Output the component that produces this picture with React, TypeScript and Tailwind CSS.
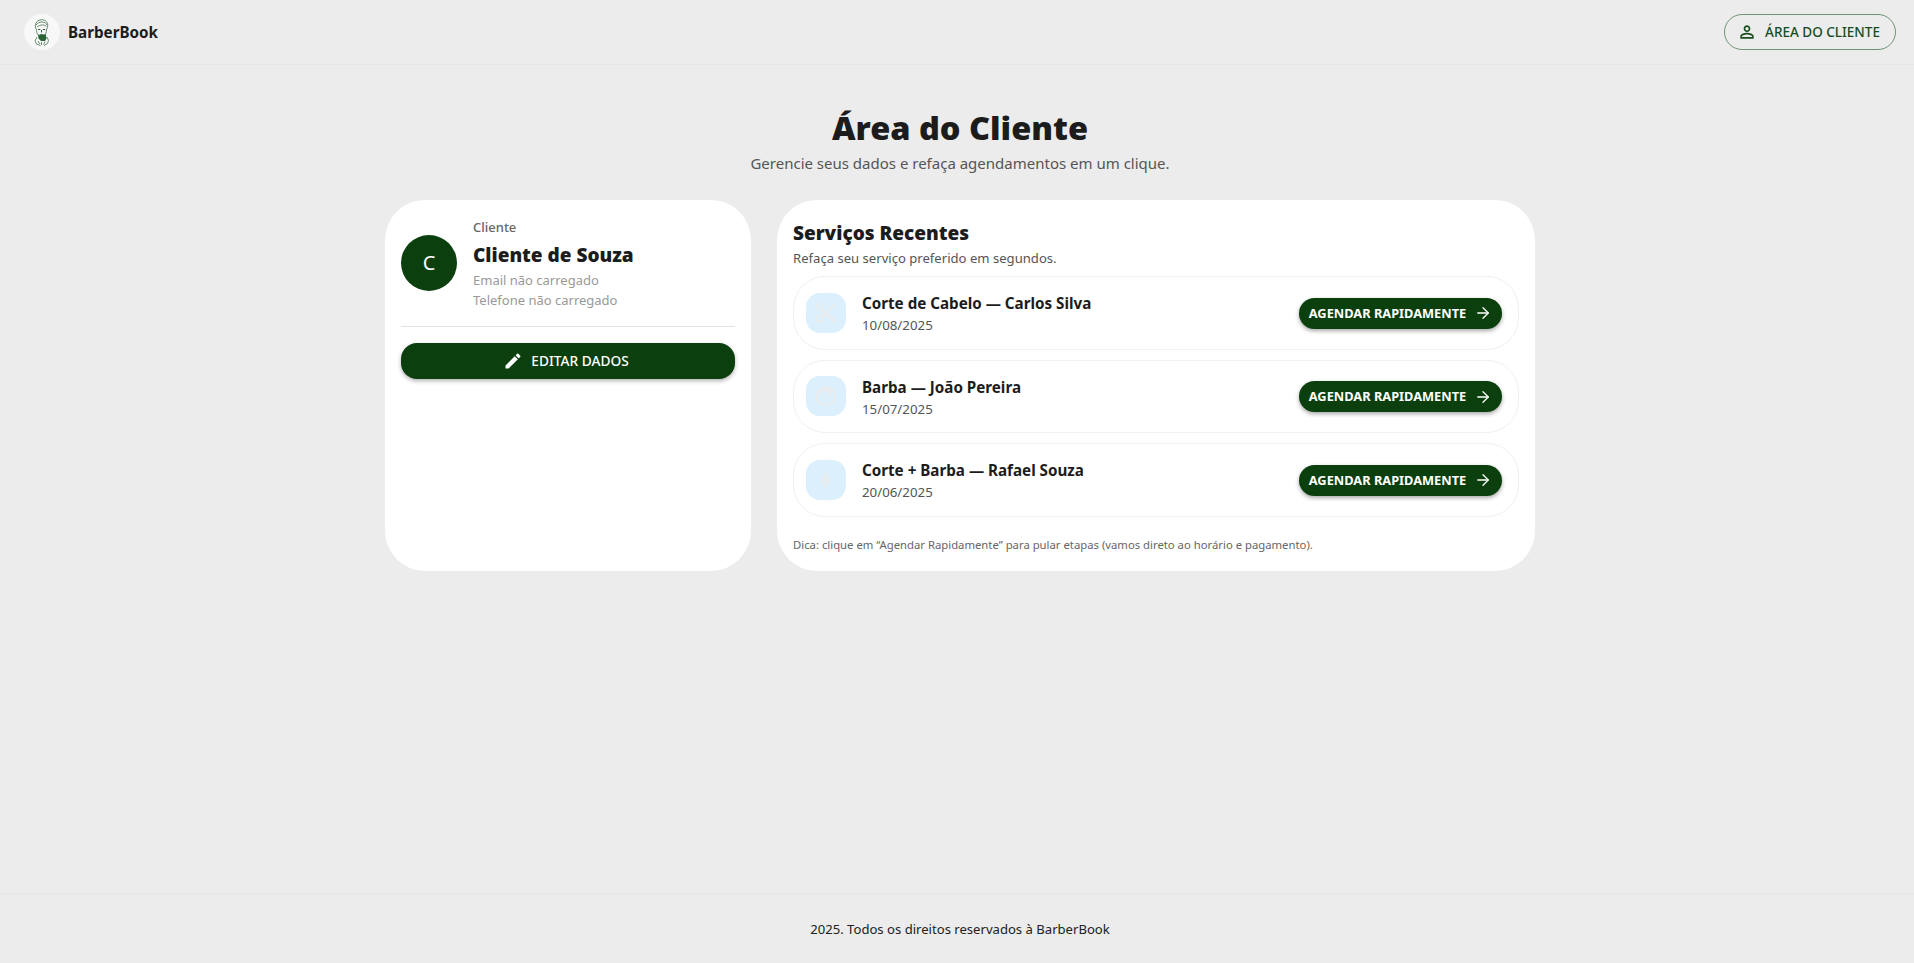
import { ArrowRight } from "lucide-react"

// material style glyphs, same ones the reference uses
const cutPath =
  "M9.64 7.64c.23-.5.36-1.05.36-1.64 0-2.21-1.79-4-4-4S2 3.79 2 6s1.79 4 4 4c.59 0 1.14-.13 1.64-.36L10 12l-2.36 2.36C7.14 14.13 6.59 14 6 14c-2.21 0-4 1.79-4 4s1.79 4 4 4 4-1.79 4-4c0-.59-.13-1.14-.36-1.64L12 14l7 7h3v-1L9.64 7.64zM6 8c-1.1 0-2-.89-2-2s.9-2 2-2 2 .89 2 2-.9 2-2 2zm0 12c-1.1 0-2-.89-2-2s.9-2 2-2 2 .89 2 2-.9 2-2 2zm6-7.5c-.28 0-.5-.22-.5-.5s.22-.5.5-.5.5.22.5.5-.22.5-.5.5zM19 3l-6 6 2 2 7-7V3z"
const facePath =
  "M9 11.75c-.69 0-1.25.56-1.25 1.25s.56 1.25 1.25 1.25 1.25-.56 1.25-1.25-.56-1.25-1.25-1.25zm6 0c-.69 0-1.25.56-1.25 1.25s.56 1.25 1.25 1.25 1.25-.56 1.25-1.25-.56-1.25-1.25-1.25zM12 2C6.48 2 2 6.48 2 12s4.48 10 10 10 10-4.48 10-10S17.52 2 12 2zm0 18c-4.41 0-8-3.59-8-8 0-.29.02-.58.05-.86 2.36-1.05 4.23-2.98 5.21-5.37C11.07 8.33 14.05 10 17.42 10c.78 0 1.53-.09 2.25-.26.21.71.33 1.47.33 2.26 0 4.41-3.59 8-8 8z"
const boltPath =
  "M11 21h-1l1-7H7.5c-.58 0-.57-.32-.38-.66.19-.34.05-.08.07-.12C8.48 10.94 10.42 7.54 13 3h1l-1 7h3.5c.49 0 .56.33.47.51l-.07.15C12.96 17.55 11 21 11 21z"

const services = [
  { id: 1, title: "Corte de Cabelo — Carlos Silva", date: "10/08/2025", icon: cutPath },
  { id: 2, title: "Barba — João Pereira", date: "15/07/2025", icon: facePath },
  { id: 3, title: "Corte + Barba — Rafael Souza", date: "20/06/2025", icon: boltPath },
]

function BarberLogo() {
  return (
    <svg width="18" height="27" viewBox="0 0 18 27" fill="none" stroke="#2c6337" strokeWidth="0.7">
      <path d="M3 10C1.5 6 2.5 1.5 8 .8c5-.5 7.5 3 6.5 7.5l-.8 2" />
      <path d="M3 6c2-2 3-3 6-3s4 1.5 5 3M4 8c2-1.5 3.500-2 5.500-2s3 .5 4 1.500" />
      <path d="M3.500 10c0 2.500.5 4.500 1.500 6M13.500 10c0 2-.3 3.500-.8 5" />
      <path d="M5 10.500h2.300M9.800 10.500h2.400M8.500 11v2.500" strokeWidth="1" />
      <path d="M5 15.500c1.500.8 2.500-.5 3.500-.5s2.500 1 4.200 0l.8 4.500-1.500 2.500H8l-2.500-2.500z" fill="#2c6337" stroke="none" />
      <path d="M4 18l-2 4 1.500 3 4 1.500M14 18l1.500 3.500-1 3-3.500 2" />
      <path d="M5 22l2 3M8.500 23v3M12 22.500l-1.500 3" />
    </svg>
  )
}

function UserIcon() {
  return (
    <svg width="20" height="20" viewBox="0 0 24 24" fill="#174d1d">
      <path d="M12 5.900a2.100 2.100 0 1 1 0 4.200 2.100 2.100 0 0 1 0-4.200m0 9c2.970 0 6.100 1.460 6.100 2.100v1.100H5.900V17c0-.64 3.130-2.100 6.100-2.100M12 4C9.790 4 8 5.790 8 8s1.790 4 4 4 4-1.790 4-4-1.790-4-4-4zm0 9c-2.670 0-8 1.340-8 4v3h16v-3c0-2.660-5.330-4-8-4z" />
    </svg>
  )
}

function PencilIcon() {
  return (
    <svg width="20" height="20" viewBox="0 0 24 24" fill="#ffffff">
      <path d="M3 17.250V21h3.750L17.810 9.940l-3.750-3.750L3 17.250zM20.710 7.040c.39-.39.39-1.020 0-1.410l-2.340-2.340c-.39-.39-1.020-.39-1.410 0l-1.830 1.830 3.750 3.750 1.830-1.830z" />
    </svg>
  )
}

export default function App() {
  return (
    <div className="min-h-[963px] flex flex-col bg-[#ececec] font-['Noto_Sans','Open_Sans',sans-serif] text-[#1c1c1c]">
      {/* Header */}
      <header className="h-[65px] flex items-center justify-between pl-6 pr-[18px] border-b border-[#e4e5ea]">
        <div className="flex items-center gap-2">
          <div className="w-9 h-9 rounded-full bg-[#f8f8f8] flex items-center justify-center">
            <BarberLogo />
          </div>
          <span className="text-[15.2px] font-bold">BarberBook</span>
        </div>
        <button className="h-9 w-[172px] flex items-center justify-center gap-2 pr-[3px] rounded-[18px] border border-[#6f9273] text-[13.5px] font-medium text-[#174d1d]">
          <UserIcon />
          ÁREA DO CLIENTE
        </button>
      </header>

      {/* Conteudo */}
      <main className="flex-1 flex flex-col items-center pt-[40px] pl-[6px]">
        <h1 className="text-[32.5px] leading-[46px] font-black">Área do Cliente</h1>
        <p className="mt-px text-[15px] leading-[22px] text-[#555555]">Gerencie seus dados e refaça agendamentos em um clique.</p>

        <div className="mt-[26px] w-[1150px] flex gap-[26px]">
          <section className="w-[366px] h-[371px] bg-white rounded-[40px] p-4 pt-[17px]">
            <div className="flex items-center gap-4 pb-[17px] border-b border-[#e2e2e2]">
              <div className="w-14 h-14 rounded-full bg-[#0b3f0e] text-white text-xl flex items-center justify-center">C</div>
              <div className="pt-px -mb-px">
                <p className="text-[13px] leading-[18px] font-medium text-[#666666]">Cliente</p>
                <p className="mt-[5px] text-[19px] leading-7 font-black">Cliente de Souza</p>
                <p className="mt-px text-[13px] leading-5 text-[#999999]">Email não carregado</p>
                <p className="text-[13px] leading-5 text-[#999999]">Telefone não carregado</p>
              </div>
            </div>
            <button className="mt-4 w-full h-9 pr-1 rounded-2xl bg-[#0b3f0e] text-white text-[13.7px] font-medium flex items-center justify-center gap-2 shadow-[0_2px_4px_rgba(0,0,0,0.3)]">
              <PencilIcon />
              EDITAR DADOS
            </button>
          </section>

          <section className="flex-1 h-[371px] bg-white rounded-[40px] px-4 pt-[19px]">
            <h2 className="text-[19px] leading-7 font-black">Serviços Recentes</h2>
            <p className="mt-0.5 text-[13.1px] leading-[18px] text-[#555555]">Refaça seu serviço preferido em segundos.</p>
            <div className="mt-[9px] flex flex-col gap-2.5">
              {services.map((s) => (
                <div key={s.id} className="h-[73.5px] flex items-center justify-between pl-3 pr-4 bg-white border border-[#f0f0f5] rounded-[32px]">
                  <div className="flex items-center gap-4">
                    <div className="w-10 h-10 rounded-[14px] bg-[#dbf0fc] flex items-center justify-center">
                      <svg width="24" height="24" viewBox="0 0 24 24" fill="#e9ecee">
                        <path d={s.icon} />
                      </svg>
                    </div>
                    <div className="pt-[2px]">
                      <p className="text-[15.2px] leading-[22px] font-bold">{s.title}</p>
                      <p className="mt-px text-[13.3px] leading-5 text-[#555555]">{s.date}</p>
                    </div>
                  </div>
                  <button className="mt-px h-[31px] w-[203px] rounded-full bg-[#0b3f0e] text-white text-[12.8px] font-bold flex items-center justify-center gap-2 shadow-[0_2px_4px_rgba(0,0,0,0.35)]">
                    AGENDAR RAPIDAMENTE
                    <ArrowRight size={18} strokeWidth={1.75} />
                  </button>
                </div>
              ))}
            </div>
            <p className="mt-5 text-[11.3px] leading-4 text-[#666666]">Dica: clique em “Agendar Rapidamente” para pular etapas (vamos direto ao horário e pagamento).</p>
          </section>
        </div>
      </main>

      {/* Rodape */}
      <footer className="h-[70px] flex items-center justify-center pl-[6px] pt-[2px] border-t border-[#e4e5ea] text-[13.1px] text-[#222222]">
        2025. Todos os direitos reservados à BarberBook
      </footer>
    </div>
  )
}
